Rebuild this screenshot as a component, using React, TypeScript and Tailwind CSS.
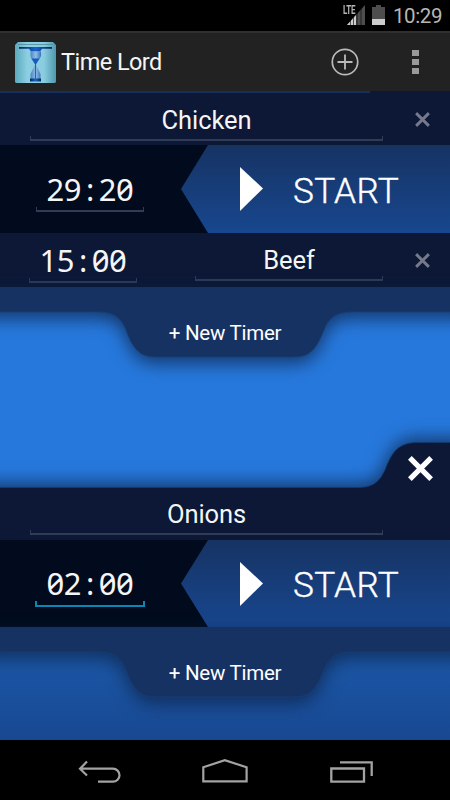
import { clsx } from "clsx";

interface IField {
      value: string;
      className?: string;
      active?: boolean;
}

function Underline({ active }: { active?: boolean }) {
      return (
            <span
                  className={clsx(
                        "block w-full shrink-0",
                        active
                              ? "h-[6px] border-2 border-t-0 border-[#0a87b5]"
                              : "h-[5px] border border-t-0 border-b-2 border-[#303c56]"
                  )}
            />
      );
}

function NameField({ value, className }: IField) {
      return (
            <div className={clsx("flex flex-col justify-between items-center", className)}>
                  <span className="text-[25.5px] leading-[30px] tracking-[-0.1px] whitespace-nowrap">{value}</span>
                  <Underline />
            </div>
      );
}

function TimeField({ value, className, active }: IField) {
      const [minutes, seconds] = value.split(":");

      return (
            <div className={clsx("flex flex-col justify-between items-center", className)}>
                  <span className="font-['Noto_Sans'] slashed-zero tabular-nums text-[31px] leading-[29px] tracking-[-0.3px] whitespace-nowrap">
                        {minutes}
                        <span className="inline-block w-[17.4px] text-center">:</span>
                        {seconds}
                  </span>
                  <Underline active={active} />
            </div>
      );
}

function Cross({ className, width }: { className?: string; width: number }) {
      return (
            <svg viewBox="0 0 24 24" className={className} fill="none" stroke="currentColor" strokeWidth={width}>
                  <path d="M1.8 1.8 22.2 22.2M22.2 1.8 1.8 22.2" />
            </svg>
      );
}

function StartRow({ time, active }: { time: string; active?: boolean }) {
      return (
            <div className={clsx("relative flex bg-[#010b1d]", active ? "h-[87px]" : "h-[88px]")}>
                  <TimeField
                        value={time}
                        active={active}
                        className={active ? "w-[110px] h-[38px] ml-[35px] mt-[29px]" : "w-[108px] h-[37px] ml-[36px] mt-[30px]"}
                  />
                  <button
                        className={clsx(
                              "flex items-center h-full w-[269px] ml-auto bg-linear-to-b from-[#163363] to-[#17478f]",
                              "[clip-path:polygon(27px_0,100%_0,100%_100%,27px_100%,0_50%)]"
                        )}
                  >
                        <svg viewBox="0 0 23 44" className="w-[23px] h-[44px] ml-[59px]" fill="#fff">
                              <path d="M0 0 23 21.500 0 44Z" />
                        </svg>
                        <span className="ml-[30px] mt-[5px] text-[35.2px] leading-none font-light tracking-[0.3px] text-white [-webkit-text-stroke:0.4px_#fff]">
                              START
                        </span>
                  </button>
            </div>
      );
}

function NewTimer() {
      return (
            <div className="relative z-10 h-[25px]">
                  <svg
                        viewBox="0 0 450 70"
                        className="absolute top-0 left-0 w-[450px] h-[70px] overflow-visible drop-shadow-[0_6px_9px_rgba(14,34,70,0.75)]"
                  >
                        <path
                              d="M-20 0H470V25H355C338 25 330 28 324 43C317 60 311 70 295 70H155C139 70 132 60 126 43C120 28 112 25 95 25H-20Z"
                              fill="#163263"
                        />
                        <path
                              d="M470 25H355C338 25 330 28 324 43C317 60 311 70 295 70H155C139 70 132 60 126 43C120 28 112 25 95 25H-20"
                              fill="none"
                              stroke="#174275"
                              strokeWidth=".7"
                        />
                  </svg>
                  <button className="absolute top-[33px] left-0 w-full text-center text-[20.5px] leading-[26px] tracking-[-0.25px] text-white">
                        + New Timer
                  </button>
            </div>
      );
}

function StatusBar() {
      return (
            <header className="flex h-[31px] shrink-0 bg-black text-[#b7b7b7]">
                  <div className="relative ml-[343px] mt-[5px] w-[23px] h-[20px]">
                        <svg viewBox="0 0 23 20" className="w-[23px] h-[20px]">
                              <path d="M22 0V20H4Z" fill="#4d4d4d" />
                              <path d="M13 10V20H4Z" fill="#ccc" />
                              <path d="M7.500 13V20M10.500 11V20M14 4V20M18 3V20" stroke="#000" strokeWidth=".6" />
                        </svg>
                        <span className="absolute left-0 top-0 bg-black text-[12px] leading-[11px] font-bold tracking-[-0.3px] origin-left scale-x-[.66]">
                              LTE
                        </span>
                  </div>
                  <svg viewBox="0 0 13 20" className="w-[13px] h-[20px] ml-[6px] mt-[5px]">
                        <path d="M0 2H4V0H9V2H13V20H0Z" fill="#4d4d4d" />
                        <path d="M0 14H13V20H0Z" fill="#ccc" />
                  </svg>
                  <span className="ml-[8px] mt-[4px] text-[20.500px] leading-[25px] tracking-[-0.4px]">10:29</span>
            </header>
      );
}

function Logo() {
      return (
            <svg viewBox="0 0 41 41" className="w-[41px] h-[41px]">
                  <defs>
                        <linearGradient id="tile">
                              <stop offset="0" stopColor="#5ba9bd" />
                              <stop offset=".3" stopColor="#8ccfe2" />
                              <stop offset=".7" stopColor="#8bcde0" />
                              <stop offset="1" stopColor="#4d98ad" />
                        </linearGradient>
                        <linearGradient id="glass">
                              <stop offset="0" stopColor="#4f83c4" />
                              <stop offset=".5" stopColor="#8dbfe8" />
                              <stop offset="1" stopColor="#3e71b5" />
                        </linearGradient>
                        <linearGradient id="metal">
                              <stop offset="0" stopColor="#092653" />
                              <stop offset=".5" stopColor="#1764cd" />
                              <stop offset="1" stopColor="#092653" />
                        </linearGradient>
                  </defs>
                  <path d="M3 0H38L41 3V40L40 41H1L0 40V3Z" fill="url(#tile)" />
                  <path d="M3 2.500H38" stroke="#4f8c9c" strokeWidth=".8" />
                  <path d="M4 5H37V6.800H27L25 9.500H16L14 6.800H4Z" fill="url(#metal)" />
                  <path d="M15.500 9.500H26V14L24.500 17 21 22.500 25.500 32V37H15.500V32L20 22.500 16.500 17 15.500 14Z" fill="url(#glass)" />
                  <path d="M16.500 16.500H24.500L20.500 23Z" fill="#125cba" />
                  <path d="M20.500 22V37" stroke="#1764bd" strokeWidth="1" />
                  <path d="M15 36.500H26V39.500H15Z" fill="url(#metal)" />
            </svg>
      );
}

function ActionBar() {
      return (
            <nav className="flex items-center h-[60px] shrink-0 bg-[#222] border-t-2 border-[#303030] pl-[15px]">
                  <Logo />
                  <h1 className="ml-[5px] mt-[2px] text-[23.5px] leading-none tracking-[-0.55px]">Time Lord</h1>
                  <svg viewBox="0 0 28 28" className="w-[28px] h-[28px] ml-auto text-[#bbb]" fill="none" stroke="currentColor">
                        <circle cx="14" cy="14" r="12.700" strokeWidth="1.700" />
                        <path d="M14 6.500V21.500M6.500 14H21.500" strokeWidth="1.800" />
                  </svg>
                  <div className="flex flex-col gap-[3px] ml-[53px] mr-[31px]">
                        <span className="w-[7px] h-[6px] bg-[#9a9a9a]" />
                        <span className="w-[7px] h-[6px] bg-[#9a9a9a]" />
                        <span className="w-[7px] h-[6px] bg-[#9a9a9a]" />
                  </div>
            </nav>
      );
}

function BottomPanel() {
      return (
            <section className="mt-[130px]">
                  <div className="relative h-[98px]">
                        <svg
                              viewBox="0 0 450 98"
                              className="absolute top-0 left-0 w-[450px] h-[98px] overflow-visible drop-shadow-[0_-4px_9px_rgba(14,34,70,0.75)]"
                        >
                              <path d="M-20 45.500H360C375 45 380 38 385 28C392 10 398 .5 418 .5H470V98H-20Z" fill="#0c1836" />
                              <path
                                    d="M-20 45.500H360C375 45 380 38 385 28C392 10 398 .5 418 .5H470"
                                    fill="none"
                                    stroke="#143c70"
                                    strokeWidth=".7"
                              />
                        </svg>
                        <button className="absolute top-[14px] left-[408px] text-white">
                              <Cross width={5} className="w-[25px] h-[25px]" />
                        </button>
                        <NameField value="Onions" className="absolute top-[57px] left-[30px] w-[353px] h-[36px]" />
                  </div>
                  <StartRow time="02:00" active />
                  <NewTimer />
                  <div className="h-[88px] bg-linear-to-b from-[#1b58a8] to-[#184891]" />
            </section>
      );
}

function NavBar() {
      return (
            <footer className="flex h-[60px] shrink-0 bg-black text-[#a3a3a3]">
                  <svg viewBox="0 0 43 26" className="w-[43px] h-[26px] ml-[78px] mt-[20px]" fill="none" stroke="currentColor" strokeWidth="2.200">
                        <path d="M9 1.500 2 8.700 9 15.500M2 8.700H35A6.500 6.500 0 0 1 35 21.700H20" />
                  </svg>
                  <svg viewBox="0 0 46 26" className="w-[46px] h-[26px] ml-[81px] mt-[17px]" fill="none" stroke="currentColor" strokeWidth="2.200">
                        <path d="M1.300 24.400V10.300L22.800 3.200 44.600 10.300V24.400Z" />
                  </svg>
                  <svg viewBox="0 0 44 24" className="w-[44px] h-[24px] ml-[82px] mt-[20px]" fill="none" stroke="currentColor" strokeWidth="2.300">
                        <path d="M1.300 8.500H34V21.700H1.300ZM10 2.300H41.700V16" />
                  </svg>
            </footer>
      );
}

function App() {
      return (
            <div className="flex flex-col w-[450px] h-[800px] overflow-hidden bg-black text-[#f5f5f5] font-[Roboto,sans-serif]">
                  <StatusBar />
                  <ActionBar />

                  <main className="h-[649px] shrink-0 overflow-hidden bg-[#2678dc]">
                        <div className="relative flex h-[54px] bg-[#0c1836] pl-[30px]">
                              <span className="absolute top-0 left-0 w-[370px] h-[1.5px] bg-[#15305f]" />
                              <NameField value="Chicken" className="w-[353px] h-[36px] mt-[14px]" />
                              <button className="ml-[32px] text-[#75798a]">
                                    <Cross width={4.6} className="w-[15px] h-[15px] mt-[3px]" />
                              </button>
                        </div>
                        <StartRow time="29:20" />
                        <div className="flex h-[54px] bg-[#0c1836] pl-[29px]">
                              <TimeField value="15:00" className="w-[108px] h-[37px] mt-[13px]" />
                              <NameField value="Beef" className="w-[188px] h-[36px] ml-[58px] mt-[12px]" />
                              <button className="ml-[32px] text-[#75798a]">
                                    <Cross width={4.6} className="w-[15px] h-[15px]" />
                              </button>
                        </div>
                        <NewTimer />
                        <BottomPanel />
                  </main>

                  <NavBar />
            </div>
      );
}

export default App;
